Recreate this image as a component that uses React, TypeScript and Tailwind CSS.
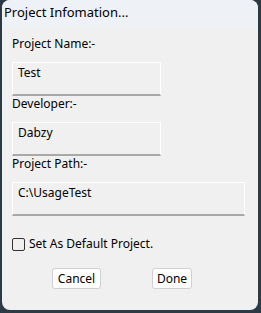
import React from "react";

const font = { fontFamily: '"Noto Sans", "Open Sans", Arial, sans-serif' };

function Field({ label, value, wide }: { label: string; value: string; wide?: boolean }) {
  return (
    <div className="flex flex-col">
      <div className="h-[16px] leading-[16px] text-[12px] text-black">{label}</div>
      <div
        className={`mt-[10px] h-[34px] border border-white border-b-2 border-b-[#a8a8a8] px-[5px] pt-[2px] text-[12px] leading-[16px] text-black ${
          wide ? "w-[233px]" : "w-[149px]"
        }`}
      >
        {value}
      </div>
    </div>
  );
}

export default function App() {
  return (
    <div className="w-[261px] h-[313px] bg-[#2c3a46] overflow-hidden" style={font}>
      <div className="ml-[2px] w-[256px] h-[310px] rounded-[8px] bg-[#f0f0f0] overflow-hidden flex flex-col">
        <div className="h-[26px] bg-[#eef2f7] px-[2px] flex items-center text-[13px] text-black">
          Project Infomation...
        </div>
        <div className="flex flex-col pl-[10px] pt-[10px]">
          <Field label="Project Name:-" value="Test" />
          <Field label="Developer:-" value="Dabzy" />
          <Field label="Project Path:-" value="C:\UsageTest" wide />
          <label className="mt-[19px] flex items-center gap-[4px] text-[12px] text-black">
            <span className="w-[13px] h-[13px] rounded-[2px] border border-[#333] bg-transparent" />
            Set As Default Project.
          </label>
          <div className="mt-[15px] flex">
            <button className="ml-[40px] h-[21px] w-[49px] rounded-[3px] border border-[#d0d0d0] bg-white text-[12px] text-black">
              Cancel
            </button>
            <button className="ml-[51px] h-[21px] w-[40px] rounded-[3px] border border-[#d0d0d0] bg-white text-[12px] text-black">
              Done
            </button>
          </div>
        </div>
      </div>
    </div>
  );
}
